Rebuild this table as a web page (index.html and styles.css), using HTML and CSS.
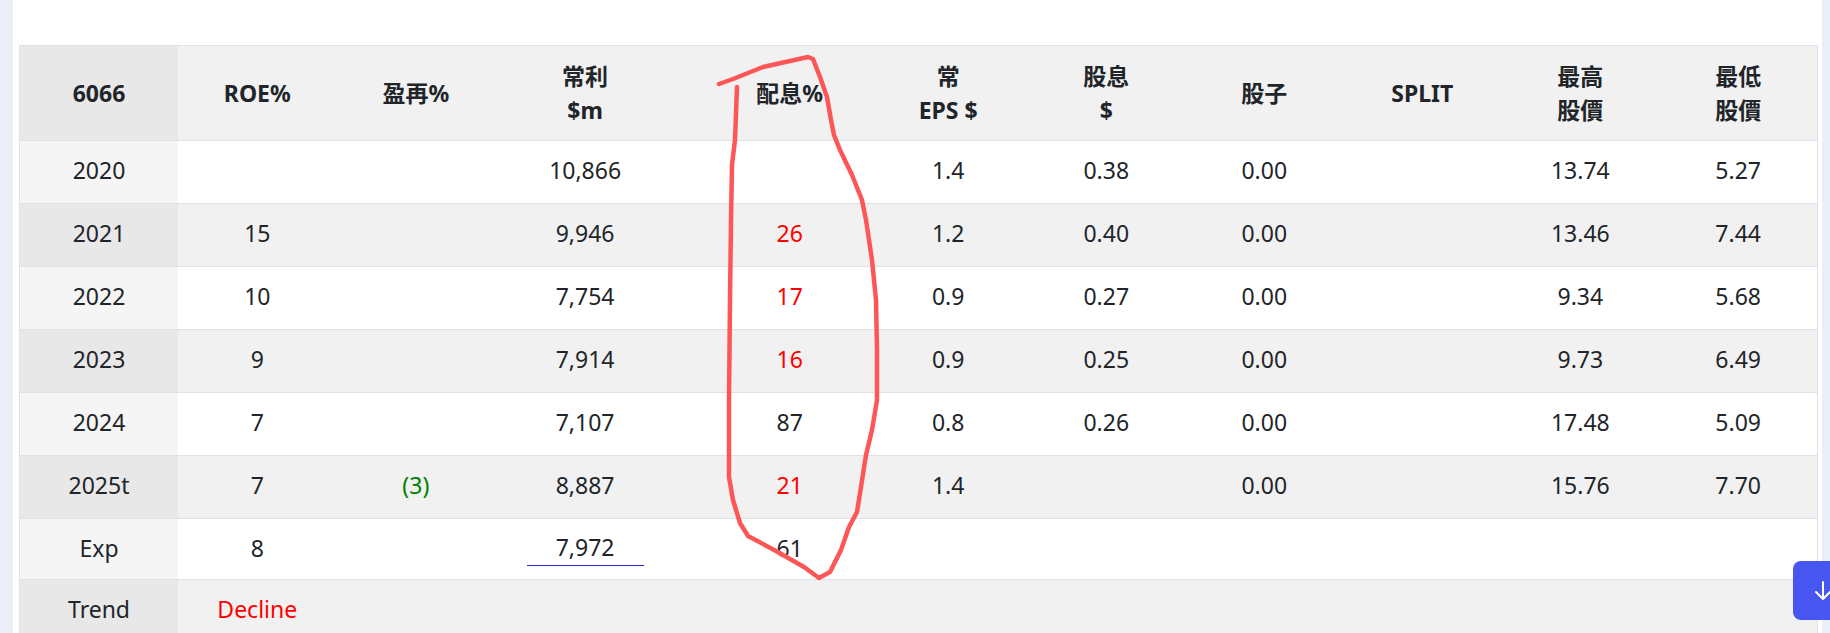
FILE: index.html
```html
<!DOCTYPE html>
<html lang="zh-Hant">
<head>
<meta charset="utf-8">
<title>6066</title>
<link rel="stylesheet" href="styles.css">
</head>
<body>
<main class="page">
  <table class="grid">
    <colgroup>
      <col class="c-std"><col class="c-std"><col class="c-std">
      <col class="c-profit"><col class="c-pay">
      <col class="c-std2"><col class="c-std2"><col class="c-std2">
      <col class="c-std2"><col class="c-std2"><col class="c-std2">
    </colgroup>
    <thead>
      <tr>
        <th class="lab">6066</th>
        <th>ROE%</th>
        <th>盈再%</th>
        <th>常利<br>$m</th>
        <th class="pay">配息%</th>
        <th>常<br>EPS $</th>
        <th>股息<br>$</th>
        <th>股子</th>
        <th>SPLIT</th>
        <th>最高<br>股價</th>
        <th>最低<br>股價</th>
      </tr>
    </thead>
    <tbody>
      <tr>
        <td class="lab">2020</td><td></td><td></td><td>10,866</td><td class="pay"></td>
        <td>1.4</td><td>0.38</td><td>0.00</td><td></td><td>13.74</td><td>5.27</td>
      </tr>
      <tr>
        <td class="lab">2021</td><td>15</td><td></td><td>9,946</td><td class="pay red">26</td>
        <td>1.2</td><td>0.40</td><td>0.00</td><td></td><td>13.46</td><td>7.44</td>
      </tr>
      <tr>
        <td class="lab">2022</td><td>10</td><td></td><td>7,754</td><td class="pay red">17</td>
        <td>0.9</td><td>0.27</td><td>0.00</td><td></td><td>9.34</td><td>5.68</td>
      </tr>
      <tr>
        <td class="lab">2023</td><td>9</td><td></td><td>7,914</td><td class="pay red">16</td>
        <td>0.9</td><td>0.25</td><td>0.00</td><td></td><td>9.73</td><td>6.49</td>
      </tr>
      <tr>
        <td class="lab">2024</td><td>7</td><td></td><td>7,107</td><td class="pay">87</td>
        <td>0.8</td><td>0.26</td><td>0.00</td><td></td><td>17.48</td><td>5.09</td>
      </tr>
      <tr>
        <td class="lab">2025t</td><td>7</td><td class="green">(3)</td><td>8,887</td><td class="pay red">21</td>
        <td>1.4</td><td></td><td>0.00</td><td></td><td>15.76</td><td>7.70</td>
      </tr>
      <tr class="exp">
        <td class="lab">Exp</td><td>8</td><td></td><td><span class="expval">7,972</span></td><td class="pay">61</td>
        <td></td><td></td><td></td><td></td><td></td><td></td>
      </tr>
      <tr>
        <td class="lab">Trend</td><td class="red">Decline</td><td></td><td></td><td class="pay"></td>
        <td></td><td></td><td></td><td></td><td></td><td></td>
      </tr>
    </tbody>
  </table>
</main>

<svg class="scribble" width="1830" height="633" viewBox="0 0 1830 633" aria-hidden="true">
  <path d="M737 87 L735 140 L732 165 L731 220 L730 300 L729 400 L729 477 L733 500 L740 523 L748 536 L776 551 L804 567 L819 578 L830 572 L841 550 L849 527 L857 512 L861 487 L866 455 L872 430 L877 400 L877 350 L876 300 L872 260 L866 220 L862 200 L852 175 L840 150 L834 135 L831 120 L827 97 L820 77 L813 59 L808 57 L790 61 L763 67 L733 79 L719 84"/>
</svg>

<button class="to-bottom" type="button" aria-label="Scroll down">
  <svg width="20" height="22" viewBox="0 0 20 22"><path d="M10 2 V19 M3 12 L10 19 L17 12"/></svg>
</button>
</body>
</html>
```

FILE: styles.css
```css
html, body {
  margin: 0;
  padding: 0;
}

body {
  background: #e9eef8;
  font-family: "Noto Sans", "Noto Sans CJK TC", sans-serif;
  color: #212529;
  overflow: hidden;
}

.page {
  display: block;
  margin-left: 13px;
  width: 1809px;
  min-height: 720px;
  box-sizing: border-box;
  padding: 45px 0 0 6px;
  background: #ffffff;
}

.grid {
  border-collapse: collapse;
  table-layout: fixed;
  width: 1799px;
  font-size: 23px;
  line-height: 1.5;
  border: 1px solid #dee2e6;
}

.c-std { width: 158.5px; }
.c-profit { width: 180px; }
.c-pay { width: 194px; }
.c-std2 { width: 158px; }

.grid th,
.grid td {
  padding: 0;
  text-align: center;
  vertical-align: middle;
}

.grid thead th {
  height: 94px;
  font-weight: 700;
  background: #f1f1f1;
  border-bottom: 1px solid #dee2e6;
  color: #212529;
}

.grid thead th.lab {
  background: #e8e8e8;
}

.grid tbody td {
  height: 59px;
  padding-bottom: 3px;
  border-bottom: 1px solid #dee2e6;
  background: #ffffff;
}

.grid tbody tr:nth-child(even) td {
  background: #f1f1f1;
}

.grid tbody td.lab {
  background: #f5f5f5;
}

.grid tbody tr:nth-child(even) td.lab {
  background: #e8e8e8;
}

.grid tbody tr.exp td {
  height: 58px;
  padding-bottom: 2px;
}

.grid .pay {
  padding-left: 35px;
}

.red {
  color: #ff0000;
}

.green {
  color: #008000;
}

.expval {
  display: inline-block;
  width: 117px;
  border-bottom: 1px solid #2424d8;
}

.scribble {
  position: absolute;
  left: 0;
  top: 0;
  pointer-events: none;
}

.scribble path {
  fill: none;
  stroke: #fd5656;
  stroke-width: 4.5;
  stroke-linecap: round;
  stroke-linejoin: round;
}

.to-bottom {
  position: fixed;
  left: 1793px;
  top: 561px;
  width: 60px;
  height: 59px;
  padding: 0;
  border: none;
  border-radius: 8px;
  background: #4856f1;
  display: flex;
  align-items: center;
  justify-content: center;
}

.to-bottom svg path {
  fill: none;
  stroke: #ffffff;
  stroke-width: 2;
  stroke-linecap: round;
  stroke-linejoin: round;
}
```
